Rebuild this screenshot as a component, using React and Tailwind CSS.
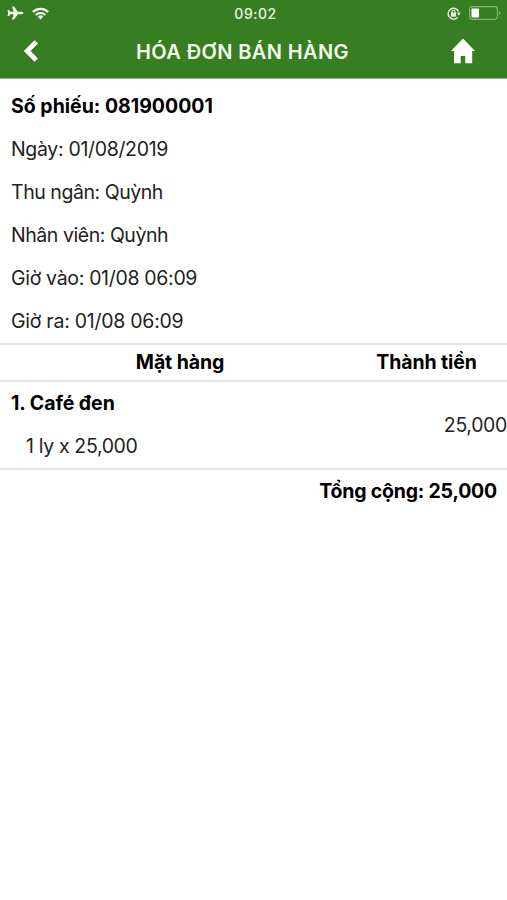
const details = [
  { label: "Ngày", value: "01/08/2019", tracking: "tracking-[-0.33px]" },
  { label: "Thu ngân", value: "Quỳnh", tracking: "tracking-[-0.45px]" },
  { label: "Nhân viên", value: "Quỳnh", tracking: "tracking-[-0.45px]" },
  { label: "Giờ vào", value: "01/08 06:09", tracking: "tracking-[-0.32px]" },
  { label: "Giờ ra", value: "01/08 06:09", tracking: "tracking-[-0.26px]" },
];

const items = [{ id: 1, name: "Café đen", quantity: "1 ly x 25,000", amount: "25,000" }];

function StatusBar() {
  return (
    <div className="grid h-[26px] grid-cols-3 items-center pl-[7px] pr-[6px]">
      <div className="flex items-center gap-[8px]">
        <svg width="17" height="14" viewBox="0 0 17 14" fill="#f3fbef">
          <path d="M16.2 7c0-.8-.7-1.200-1.600-1.200h-3.700L7 .6H5l1.700 5.200H3.400L1.900 4.100H.5L1.200 7 .5 9.900h1.400l1.500-1.700h3.300L5 13.400h2l3.900-5.200h3.700c.9 0 1.600-.4 1.600-1.200z" />
        </svg>
        <svg width="17" height="13" viewBox="0 0 17 13" fill="none" stroke="#f3fbef" strokeWidth="2.200">
          <path d="M.9 5.100a10.700 10.700 0 0 1 15.200 0" />
          <path d="M3.700 8a6.800 6.800 0 0 1 9.600 0" />
          <path d="M8.500 12.500 5.800 9.700a3.800 3.800 0 0 1 5.400 0z" fill="#f3fbef" stroke="none" />
        </svg>
      </div>
      <span className="pl-[3px] pt-px text-center text-[14px] font-medium leading-none tracking-[0.5px] text-[#e9f7e2]">09:02</span>
      <div className="flex items-center justify-end gap-[8px]">
        <svg width="14" height="13" viewBox="0 0 14 13" fill="none" stroke="#dff0d6">
          <path d="M10.800 10.100A5.400 5.400 0 1 1 11.500 4.500" strokeWidth="1.500" />
          <path d="m9.700 5.700 4-.3-1.800 3.200z" fill="#dff0d6" stroke="none" />
          <rect x="3.900" y="5.500" width="5.200" height="4.200" rx=".5" fill="#dff0d6" stroke="none" />
          <path d="M5 6V4.700a1.500 1.500 0 0 1 3 0V6" strokeWidth="1.100" />
        </svg>
        <svg width="32" height="14" viewBox="0 0 32 14" fill="none">
          <rect x=".6" y=".6" width="27.800" height="12.800" rx="2.800" stroke="#85b673" strokeWidth="1.100" />
          <rect x="2.500" y="2.400" width="7.500" height="9.200" rx=".8" fill="#fff" />
          <path d="M30 5v4c.9-.3 1.400-1 1.400-2S30.900 5.300 30 5z" fill="#85b673" />
        </svg>
      </div>
    </div>
  );
}

function Header() {
  return (
    <header className="h-[79px] border-b border-[#8fb582] bg-[#377e22]">
      <StatusBar />
      <div className="flex h-[50px] items-center justify-between pl-[23px] pr-[32px]">
        <button type="button" aria-label="Quay lại">
          <svg width="16" height="22" viewBox="0 0 16 22" fill="#fff">
            <path d="M11.500.3 15 3.600 7.600 11l7.400 7.400-3.500 3.300L.8 11z" />
          </svg>
        </button>
        <h1 className="mr-[5px] pt-px text-[20px] font-semibold leading-none tracking-[0.38px] text-[#f1fbeb]">
          HÓA ĐƠN BÁN HÀNG
        </h1>
        <button type="button" aria-label="Trang chủ">
          <svg width="24" height="26" viewBox="0 0 24 26" fill="#fff">
            <path d="M12 .5 24 13h-2.800v12.300h-6.900v-7.200H9.700v7.200H3V13H0z" />
          </svg>
        </button>
      </div>
    </header>
  );
}

export default function App() {
  return (
    <div className="h-[900px] w-[507px] overflow-hidden bg-white font-['Inter',sans-serif] text-[19.500px] leading-none text-[#222]">
      <Header />

      <section className="flex flex-col pl-[11px] pt-[6px]">
        <p className="flex h-[43px] items-center font-bold text-black">Số phiếu: 081900001</p>
        {details.map((row) => (
          <p key={row.label} className={`flex h-[43px] items-center ${row.tracking}`}>
            {row.label}: {row.value}
          </p>
        ))}
      </section>

      <section className="border-y-2 border-[#e3e3e3]">
        <div className="flex h-[37px] items-center border-b-2 border-[#e3e3e3] font-bold text-black">
          <span className="w-[360px] text-center tracking-[-0.1px]">Mặt hàng</span>
          <span className="flex-1 pr-[14px] text-center tracking-[-0.1px]">Thành tiền</span>
        </div>
        {items.map((item) => (
          <div key={item.id} className="flex h-[86px] items-center justify-between pl-[11px]">
            <div>
              <p className="flex h-[43px] items-center font-bold tracking-[-0.05px] text-black">
                {item.id}. {item.name}
              </p>
              <p className="flex h-[43px] items-center pl-[15px] tracking-[-0.35px]">{item.quantity}</p>
            </div>
            <span className="pt-px tracking-[-0.35px]">{item.amount}</span>
          </div>
        ))}
      </section>

      <p className="flex h-[43px] items-center justify-end pr-[10px] font-bold tracking-[-0.2px] text-black">
        Tổng cộng: 25,000
      </p>
    </div>
  );
}
